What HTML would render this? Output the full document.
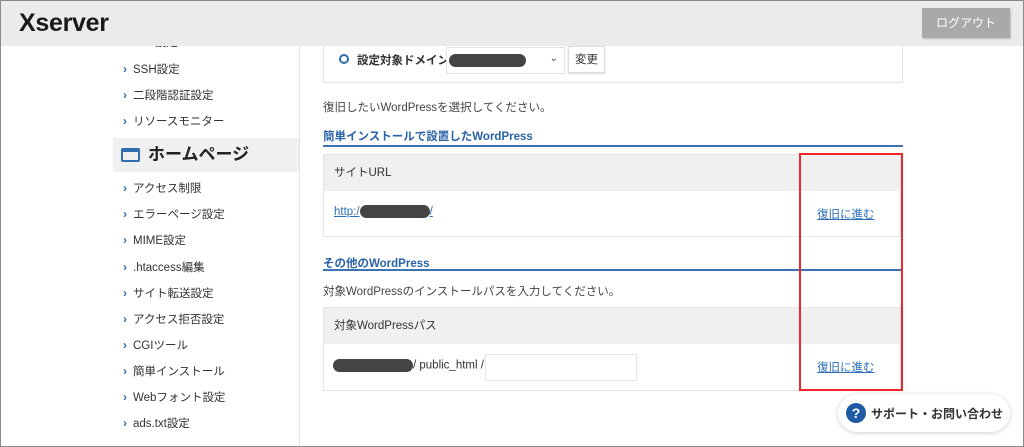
<!DOCTYPE html>
<html><head><meta charset="utf-8"><style>
*{margin:0;padding:0;box-sizing:border-box}
body{width:1024px;height:447px;overflow:hidden;background:#fff;font-family:"Liberation Sans","Noto Sans CJK JP",sans-serif;color:#333;position:relative}
.frame{position:absolute;left:0;top:0;width:1024px;height:447px;border:1px solid #8a8a8a;z-index:50;pointer-events:none}
.hdr{position:absolute;left:0;top:0;width:1024px;height:46px;background:#ebebeb;z-index:5}
.logo{position:absolute;left:19px;top:9px;font-size:25px;font-weight:bold;color:#1a1a1a;letter-spacing:-0.3px}
.out{position:absolute;left:922px;top:8px;width:88px;height:30px;background:#a9a9a9;color:#fff;font-size:12px;text-align:center;line-height:30px;box-shadow:1px 1px 2px rgba(0,0,0,.2)}
.side{position:absolute;left:113px;top:46px;width:187px;height:401px;border-right:1px solid #e3e3e3}
.it{position:absolute;left:10px;font-size:11.5px;color:#333;height:16px;line-height:16px}
.it:before{content:"›";color:#2f6fb0;font-weight:bold;font-size:12px;margin-right:6px}
.hp{position:absolute;left:0;top:92px;width:186px;height:34px;background:#f0f0f0;font-size:17px;font-weight:bold;color:#222;line-height:34px;padding-left:35px}
.hp i{position:absolute;left:8px;top:10px;width:19px;height:14px;border:2px solid #2f6fb0;border-top-width:4px;border-radius:2px}
.abs{position:absolute}
.sel{position:absolute;left:323px;top:40px;width:580px;height:43px;border:1px solid #e3e3e3;border-top:none}
.t12{font-size:11.5px}
.blue{color:#2a62a8;font-weight:bold;font-size:11.5px}
.line{position:absolute;left:323px;width:580px;height:2px;background:#3f72b3}
.tbl{position:absolute;left:323px;width:578px;border:1px solid #e5e5e5}
.th{height:36px;background:#f0f0f0;font-size:11.5px;line-height:36px;padding-left:10px}
a{color:#2a6fb8;text-decoration:underline;font-size:11.5px}
.blob{display:inline-block;background:#444;border-radius:8px;height:13px;vertical-align:middle}
</style></head><body>
<div class="hdr"><div class="logo">Xserver</div><div class="out">ログアウト</div></div>
<div class="side">
<div class="it" style="top:-12px">SSL設定</div>
<div class="it" style="top:15px">SSH設定</div>
<div class="it" style="top:41px">二段階認証設定</div>
<div class="it" style="top:67px">リソースモニター</div>
<div class="hp"><i></i>ホームページ</div>
<div class="it" style="top:134px">アクセス制限</div>
<div class="it" style="top:160px">エラーページ設定</div>
<div class="it" style="top:186px">MIME設定</div>
<div class="it" style="top:213px">.htaccess編集</div>
<div class="it" style="top:239px">サイト転送設定</div>
<div class="it" style="top:265px">アクセス拒否設定</div>
<div class="it" style="top:291px">CGIツール</div>
<div class="it" style="top:317px">簡単インストール</div>
<div class="it" style="top:343px">Webフォント設定</div>
<div class="it" style="top:369px">ads.txt設定</div>
</div>
<div class="sel"></div>
<div class="abs" style="left:339px;top:54px;width:10px;height:10px;border:2px solid #2f6fb0;border-radius:50%"></div>
<div class="abs t12" style="left:357px;top:52px;font-weight:bold;color:#333">設定対象ドメイン</div>
<div class="abs" style="left:446px;top:47px;width:119px;height:27px;border:1px solid #e0e0e0;background:#fff"><span class="blob" style="position:absolute;left:2px;top:6px;width:77px"></span><span style="position:absolute;right:6px;top:5px;font-size:10px;color:#444">⌄</span></div>
<div class="abs t12" style="left:568px;top:46px;width:37px;height:27px;border:1px solid #ddd;background:#fff;box-shadow:0 1px 2px rgba(0,0,0,.15);text-align:center;line-height:26px">変更</div>
<div class="abs t12" style="left:323px;top:99px;color:#444">復旧したいWordPressを選択してください。</div>
<div class="abs blue" style="left:323px;top:128px">簡単インストールで設置したWordPress</div>
<div class="line" style="top:145px"></div>
<div class="tbl" style="top:154px;height:83px"><div class="th">サイトURL</div>
<div style="padding:11px 0 0 10px"><a>http:/<span class="blob" style="width:70px"></span>/</a></div>
<a style="position:absolute;left:493px;top:51px">復旧に進む</a></div>
<div class="abs blue" style="left:323px;top:255px">その他のWordPress</div>
<div class="line" style="top:269px"></div>
<div class="abs t12" style="left:323px;top:283px;color:#444">対象WordPressのインストールパスを入力してください。</div>
<div class="tbl" style="top:307px;height:84px"><div class="th">対象WordPressパス</div>
<div class="abs t12" style="left:9px;top:51px"><span class="blob" style="width:80px"></span>/ public_html /</div>
<div class="abs" style="left:161px;top:46px;width:152px;height:27px;border:1px solid #e5e5e5"></div>
<a style="position:absolute;left:493px;top:51px">復旧に進む</a></div>
<div class="abs" style="left:799px;top:153px;width:104px;height:238px;border:2px solid #f0262a"></div>
<div class="abs" style="left:838px;top:394px;width:172px;height:38px;background:#fff;border-radius:19px;box-shadow:0 1px 5px rgba(0,0,0,.2)"><div class="abs" style="left:8px;top:9px;width:20px;height:20px;border-radius:50%;background:#1f5aa6;color:#fff;font-weight:bold;font-size:14px;text-align:center;line-height:20px">?</div><div class="abs" style="left:33px;top:11px;font-size:12px;font-weight:bold;color:#333">サポート・お問い合わせ</div></div>
<div class="frame"></div>
</body></html>
